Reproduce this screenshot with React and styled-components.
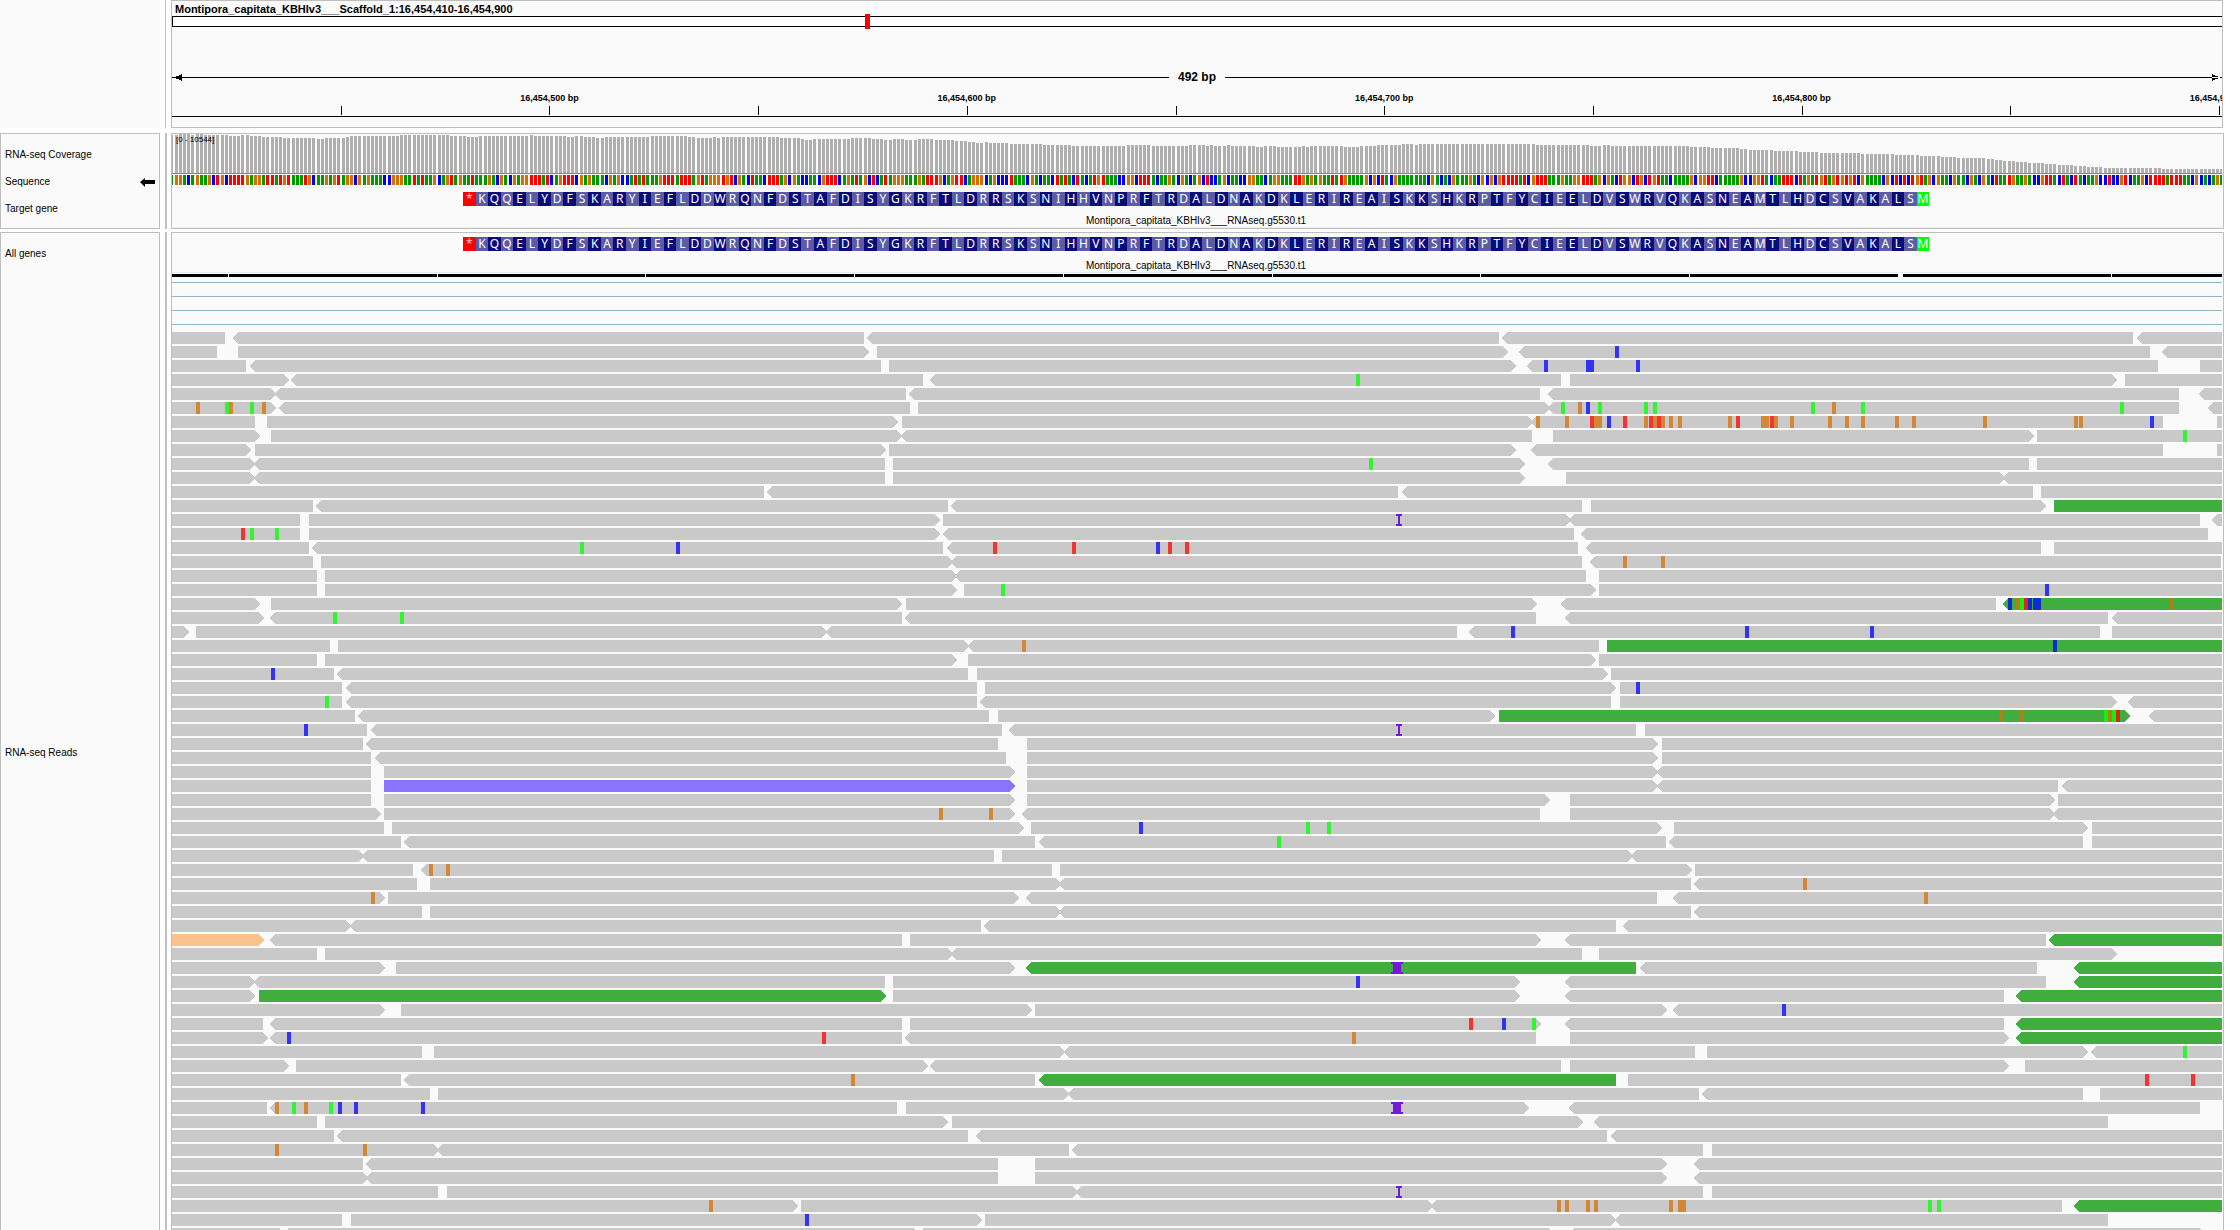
import React from "react";
import styled, { createGlobalStyle } from "styled-components";

const GlobalStyle = createGlobalStyle`
  * { box-sizing: border-box; }
  html, body { margin: 0; background: #ffffff; }
  body { font-family: "Liberation Sans", Arial, sans-serif; color: #000000; }
`;

const LINE = "#bfbfbf";
const PANEL = "#fafafa";

/* ---------- layout ---------- */

const Browser = styled.main`
  display: flex;
  flex-direction: column;
  height: 100vh;
  overflow: hidden;
`;

const PanelRow = styled.section`
  display: flex;
  flex: ${(p) => (p.$grow ? "1 1 0" : "none")};
  min-height: 0;
  margin-bottom: ${(p) => p.$gap || 0}px;
  padding-right: ${(p) => (p.$framed ? 16 : 17)}px;
`;

const NamePanel = styled.div`
  display: flex;
  flex-direction: column;
  flex: none;
  width: 160px;
  background: ${PANEL};
  border: ${(p) => (p.$framed ? `1px solid ${LINE}` : "none")};
  border-bottom-width: ${(p) => (p.$open ? 0 : 1)}px;
`;

const Divider = styled.div`
  flex: none;
  width: 6px;
  margin-left: 5px;
  border-left: ${(p) => p.$size}px solid ${LINE};
`;

const DataPanel = styled.div`
  display: flex;
  flex-direction: column;
  flex: 1;
  min-width: 0;
  overflow: hidden;
  background: ${PANEL};
  border: 1px solid ${LINE};
  border-bottom-width: ${(p) => (p.$open ? 0 : 1)}px;
  padding-right: ${(p) => (p.$framed ? 1 : 0)}px;
`;

const TrackName = styled.div`
  display: flex;
  align-items: center;
  justify-content: space-between;
  flex: ${(p) => (p.$height ? "none" : "1")};
  height: ${(p) => (p.$height ? `${p.$height}px` : "auto")};
  padding: 2px 4px 0;
  font-size: 10px;
  line-height: 12px;
`;

/* ---------- header ---------- */

const Locus = styled.h1`
  margin: 0;
  padding: 1px 3px 0;
  height: 15px;
  font-size: 11px;
  line-height: 14px;
  font-weight: bold;
  white-space: nowrap;
`;

const Ideogram = styled.div`
  position: relative;
  height: 11px;
  background: #ffffff;
  border: 1px solid #000000;
  border-right: 0;
`;

const Marker = styled.div`
  position: absolute;
  top: -3px;
  left: 33.78%;
  width: 5px;
  height: 15px;
  background: #ff0000;
`;

const Span = styled.div`
  display: flex;
  align-items: center;
  height: 14px;
  margin-top: 43px;
  font-size: 12px;
  line-height: 14px;
  font-weight: bold;
`;

const SpanLine = styled.div`
  flex: 1;
  height: 1px;
  background: #000000;
`;

const SpanText = styled.div`
  padding: 0 9px;
`;

const Arrowhead = styled.svg`
  display: block;
  flex: none;
  width: 10px;
  height: 7px;
`;

const Ruler = styled.svg`
  display: block;
  width: 100%;
  height: 43px;
  font-size: 9px;
  font-weight: bold;
  text-anchor: middle;
`;

/* ---------- tracks ---------- */

const Coverage = styled.div`
  position: relative;
  height: 40px;
`;

const Range = styled.span`
  position: absolute;
  left: 4px;
  top: 1px;
  font-size: 8px;
  line-height: 10px;
`;

const Chart = styled.svg`
  display: block;
  flex: none;
  width: 100%;
  height: ${(p) => p.$height}px;
`;

const SequenceTrack = styled.div`
  height: 14px;
  padding-top: 1px;
  border-bottom: 1px solid #ececec;
`;

const GeneTrack = styled.div`
  flex: none;
  height: 40px;
  padding: 4px 0 0 14.2%;
  border-bottom: 1px solid #ececec;
`;

const Gene = styled.div`
  width: 83.34%;
`;

const Residues = styled.div`
  display: flex;
  height: 14px;
`;

const RESIDUE_COLORS = { stop: "#ff0000", start: "#00ff00", light: "#5c5ca4", dark: "#0c0c78" };

const Residue = styled.span`
  flex: 1 1 0;
  min-width: 0;
  text-align: center;
  font-family: "Noto Sans", "Open Sans", sans-serif;
  font-size: 12px;
  line-height: 14px;
  color: ${(p) => (p.$kind === "stop" ? "#ffc4c4" : "#ffffff")};
  background: ${(p) => RESIDUE_COLORS[p.$kind]};
`;

const GeneName = styled.div`
  margin-top: 8px;
  text-align: center;
  font-size: 10px;
  line-height: 14px;
  white-space: nowrap;
`;

const Lane = styled.div`
  flex: none;
  height: ${(p) => p.$height}px;
  border-top: 1px solid #94b5c6;
`;

/* ---------- data ---------- */

const VIEW = 2050;
const BASE = VIEW / 491;
const baseX = (k) => Math.floor(k * BASE - 1.04);

const SEQUENCE = [
  "GOOGBGOGGOBROBRRRROGOOGRRGRORG",
  "GGROBGGOGORGOOBOGOGGGBBOOOGGRG",
  "RGGOBGORGOGGRGGGOGBOGBOGOORRRG",
  "RBGORRRBOGOGGGBOGOBBGRGRGGGORRRGRRRGORGOOOROR",
  "BOGBRGGBRRRGOBOGBBGGBORRRBGOGRGOBRBGRGOOOGGGOGRRROBGOR",
  "RBGOOOBGOBBBRGGGBOGBGGBRGRGBRGBGRORGGGBB",
  "OOBRRRGBGGOGBOGBGOBRBBGOBGGBBOOGGBGOOGGG",
  "RROGOGOGGRGROGGGGOBOBRGBOGGGGGGGBOGBGBOG",
  "GGOGBOBOBORRRRGRBORRRGGGOGGOORRRGOBOGBRO",
  "OBROBRORGGBGGGGOBOORRBGGGGGOBBOORGBGGRRR",
  "BRGOGRORGOR",
  "ORORBOGGGGBOBRBRBRORGOBOGGBOGGBOGBOGBRGG",
  "ROGGOGBBORRGBRGBRGBGGOBBRBBORBGGOBRRRRGR",
  "RRGGBOBGBGOG",
].join("");

const BASE_COLORS = { G: "#009900", O: "#d17105", B: "#0000ff", R: "#ff0000" };

const PROTEIN =
  "*KQQELYDFSKARYIEFLDDWRQNFDSTAFDISYGKRFTLDRRSKSNIHHVNPRFTRDALDNAKDKLERIREAISKKSHKRPTFYCIEELDVSWRVQKASNEAMTLHDCSVAKALSM";

/* coverage depth steps: [start, bar height] */
const DEPTH = [
  [0, 38], [7, 39], [19, 38], [23, 39], [32, 38], [56, 37], [69, 38], [77, 37], [90, 36], [111, 35],
  [145, 34], [153, 35], [174, 36], [178, 37], [228, 38], [278, 37], [295, 36], [307, 37],
  [334, 36], [338, 37], [358, 38], [362, 37], [396, 36], [403, 37], [411, 36], [423, 35],
  [433, 36], [479, 37], [515, 36], [525, 35], [541, 36], [545, 35], [550, 36], [608, 35],
  [629, 34], [633, 33], [641, 34], [679, 35], [700, 34], [712, 33], [721, 34], [733, 33],
  [746, 34], [763, 33], [783, 32], [796, 31], [803, 30], [813, 31], [816, 30], [838, 29],
  [870, 28], [900, 27], [955, 28], [979, 27], [1016, 28], [1033, 27], [1038, 28], [1041, 27],
  [1055, 28], [1059, 27], [1083, 26], [1092, 27], [1104, 26], [1129, 27], [1133, 26],
  [1138, 27], [1171, 26], [1188, 27], [1204, 28], [1229, 29], [1242, 28], [1246, 29],
  [1363, 28], [1417, 27], [1431, 28], [1439, 27], [1517, 26], [1539, 25], [1567, 24],
  [1576, 23], [1601, 22], [1626, 21], [1647, 20], [1689, 19], [1723, 18], [1748, 17],
  [1769, 16], [1785, 15], [1815, 14], [1823, 13], [1831, 12], [1844, 11], [1856, 10],
  [1873, 9], [1886, 8], [1902, 7], [1915, 6], [1932, 5], [1990, 4],
];

/*
 * One line per alignment row, split into four windows by "/".
 *   a:b      gap between two reads; ">" or "<" marks a read end drawn as an arrow,
 *            a trailing letter colours the read on the right
 *   G O B R  mismatched base,  I W  small or large insertion
 */
const READS = `
195:234< / 552:576< / 897:921< / 1239:1266<
171:234 / 552>:591 / 909>:972< B1245 / 1290:1341<
258:285< / 603:627 / 933>:996< B1032 B1158 B1170 B1308 / 1314:1440
372>:408< / 729:765< / G468 1083:1110 / 1176>:1215
333>:360< / 678:702< / 1020:1059< / 1377:1452<
O108 G195 O207 G270 O306 333>:372< / 690:714 / 1035>:1059< G1083 O1134 B1158 G1194 G1332 G1359 / G273 O336 G423 G1200 1377:1479<
285:321 / 639>:666 / 984>:1008< O1008 O1095 R1170 O1182 O1194 B1221 R1269 O1332 R1347 O1359 R1371 O1383 O1407 O1434 / O24 R48 O123 O135 R150 O162 O210 O324 O375 O423 O525 O576 O789 O1062 O1077 B1290 1329:1491
285>:333 / 651>:678< / 996:1059 / 927>:951 G1389
258>:285 / 603>:627 / 933>:1008< / 1329:1491
270>:297< / 615:639 / G507 960>:1059< / 927:951
270>:297< / 615:639 / 960>:1098 / 840>:864<
 / 252:276< / 594:621< / 939:963
459:483< / 804:828< / 1146:1173 / 963>:1002g
420:447 / 765>:789 / I588 1098>:1122< / 1440:1491<
R243 G270 G345 420:447 / 765>:804< / 1122:1158< / 1464:1600
447:471< G1260 B1548 / 789:816< R939 R1176 B1428 R1464 R1515 / 1134:1173< / 963:1002
459:483 / 804>:828< / 1146:1185< O1269 O1383 / 1503:1600
471:495 / 816>:840< / 1158:1197 /
471:495 / 816>:852 G963 / 1173>:1197 / B975
285>:333 / 651>:678 / 996>:1098< / 828:864<g B864 O888 G900 R912 B924 B939 B951 O1350
297>:345< G519 G720 / 666:690< / 1008:1110< / 1164:1191<
72>:108 / 426>:453< / 771:822< B933 / B75 B450 1140:1176
510:534 / 852>:879< O1026 / 1197:1221g / B999
471:495 / 816>:864 / 1173>:1197 /
B333 522:546< / 864:891 / 1209>:1233 /
546:573< / 891:915 / 1233>:1260 B1308 /
G495 546:573< / 891:915< / 1233:1260 / 1176>:1239<
585:609< / 927:954 / 870>:897g / O837 O900 G1152 O1164 G1176 R1188 1215>:1302<
B432 621:648< / 966:1002< / I588 1308:1335 /
609:633< / 954:1041 / 1359>:1386 /
633:660< / 978:1041 / 1359>:1386 /
633:672 / 990>:1041 / 1359>:1386< /
633:672p / 990>:1041 / 1359>:1386< / 1014:1041<
633:672 / 990>:1041 / 1035>:1110 / 990>:1014
648>:672 / O777 O927 990>:1041< / 1020:1110 / 990>:1014<
672:696 / 1017>:1053 B1377 / G318 G381 1371>:1422 / 1089>:1116
723:747< / 1065:1092< / G231 1398:1422< / 1089:1116
597>:621< / 942:966 / 1284>:1308< /
759:798< O807 O858 / 1116:1140 / 1461>:1485 /
771:810 / 1128>:1152< / 1473:1497< / O249
O633 660>:684 / 1002>:1053< / 1371:1434< / O612
786:810 / 1128>:1152< / 1473:1497< /
558>:585< / 903:927< / 1248:1284< /
297>:345< / 666:690 / 1008>:1110< / 978:1002<g
471:495 / 804>:828< / 1146:1197 / 1176>:1600
660>:708 / 990>:1053<g / W573 1308:1335< / 951:1077<g
270>:297< / 615:639 / B468 945>:1110< / 978:1077<g
270>:297g / 603>:639 / 945>:1110< / 852:903<g
660>:723 / 1041>:1065 / 1386>:1434< / B186
309:345< / 666:690 / R807 B906 G996 1008>:1110< / 852:903<g
309>:345< B381 / R426 666:690< / O456 1008:1110 / 852>:903<g
786:822 / 1140>:1167< / 1485:1521 / 1089>:1128< G1389
372>:408 / 729>:765< / 1083:1110 / 852>:915
723:747< / O513 1065:1092<g / 1248:1284 / R1275 R1413
810:834 / 1152>:1179< / 1497:1521< / 1089:1140
321:345< O345 G396 O432 G507 B534 B582 B783 / 651:678 / W573 972>:1122< / 1440:1600
471:495 / 789>:816 / 1134>:1197< / 1164:1600
522:546< / 864:903< / 1221:1248< /
O345 O609 822>:846< / 1167:1191< / 1509:1536 /
609:633< / 954:1065 / 1386>:1497< /
609>:633< / 954:1065 / 1386>:1497< /
834:861 / 1179>:1203< / I588 1509:1536 /
 / O87 339>:363 / 684>:708< O1071 O1095 O1158 O1182 O1407 O1434 O1446 / G624 G651 1026:1077<g
546:573 / B375 891>:915 / 1233>:1260< / 1164:1600
360:384 / 702>:729 / 1047>:1122< / 1440>:1600`;

const FIRST_READ_COLOR = { 43: "o" };
const READ_COLORS = { n: "#c9c9c9", g: "#3fae3f", p: "#8b74ff", o: "#fcc28b" };
const MISMATCH = {
  n: { G: "#33f433", O: "#d18736", B: "#3333f4", R: "#f43333" },
  g: { G: "#11f011", O: "#ae8019", B: "#112bd2", R: "#d22b11" },
};

function parseRow(line, row) {
  const reads = [];
  const marks = [];
  let current = { color: FIRST_READ_COLOR[row] || "n", start: -10, left: false };
  line.split("/").forEach((part, win) => {
    const toX = (v) => Math.round((win * 1560 + Number(v) - 36) / 3);
    part.trim().split(/\s+/).filter(Boolean).forEach((token) => {
      const gap = token.match(/^(\d+)(>?):(\d+)(<?)([gp]?)$/);
      if (gap) {
        reads.push({ ...current, end: toX(gap[1]), right: gap[2] === ">" });
        current = { color: gap[5] || "n", start: toX(gap[3]), left: gap[4] === "<" };
      } else {
        marks.push({ kind: token[0], x: toX(token.slice(1)), on: current.color });
      }
    });
  });
  if (current.start < VIEW) reads.push({ ...current, end: VIEW + 10, right: false });
  return { reads, marks };
}

const ROWS = READS.slice(1).split("\n").map(parseRow);

/* ---------- drawings ---------- */

function Read({ read, y }) {
  const { start, end, left, right, color } = read;
  const points = [[start, y]];
  points.push([end, y]);
  if (right) points.push([end + 5, y + 6]);
  points.push([end, y + 12], [start, y + 12]);
  if (left) points.push([start - 5, y + 6]);
  return <polygon points={points.join(" ")} fill={READ_COLORS[color]} />;
}

function Mark({ mark, y }) {
  if (mark.kind === "I" || mark.kind === "W") {
    const w = mark.kind === "I" ? 6 : 12;
    return (
      <g fill="#7617db">
        <rect x={mark.x} y={y} width={w} height="2" />
        <rect x={mark.x + 2} y={y} width={w - 4} height="12" />
        <rect x={mark.x} y={y + 10} width={w} height="2" />
      </g>
    );
  }
  const palette = MISMATCH[mark.on] || MISMATCH.n;
  return <rect x={mark.x} y={y} width="4" height="12" fill={palette[mark.kind]} />;
}

function ReadsChart() {
  const height = ROWS.length * 14;
  return (
    <Chart $height={height} viewBox={`0 0 ${VIEW} ${height}`} preserveAspectRatio="none" shapeRendering="crispEdges">
      {ROWS.map((row, i) => (
        <g key={i}>
          {row.reads.map((read, j) => <Read key={j} read={read} y={i * 14} />)}
          {row.marks.map((mark, j) => <Mark key={j} mark={mark} y={i * 14} />)}
        </g>
      ))}
    </Chart>
  );
}

function CoverageChart() {
  const bars = [];
  for (let k = 0; k < 492; k += 1) {
    const x = baseX(k);
    let depth = DEPTH[0][1];
    DEPTH.forEach(([from, h]) => { if (x + 1 >= from) depth = h; });
    bars.push(<rect key={k} x={x} y={39 - depth} width="3" height={depth} />);
  }
  return (
    <Chart $height={40} viewBox={`0 0 ${VIEW} 40`} preserveAspectRatio="none" shapeRendering="crispEdges" fill="#afafaf">
      {bars}
      <rect x="0" y="39" width={VIEW} height="1" fill="#868686" />
    </Chart>
  );
}

function SequenceChart() {
  return (
    <Chart $height={10} viewBox={`0 0 ${VIEW} 10`} preserveAspectRatio="none" shapeRendering="crispEdges">
      {SEQUENCE.split("").map((base, k) => (
        <rect key={k} x={baseX(k)} y="0" width="3" height="10" fill={BASE_COLORS[base]} />
      ))}
    </Chart>
  );
}

const SPLICE = [[0, 56], [57, 265], [266, 473], [474, 682], [683, 891], [892, 1100], [1101, 1308], [1309, 1517], [1518, 1726], [1731, 1939], [1940, 2050]];

function GeneBars() {
  return (
    <Chart $height={9} viewBox={`0 0 ${VIEW} 9`} preserveAspectRatio="none" shapeRendering="crispEdges">
      {SPLICE.map(([a, b]) => <rect key={a} x={a} y="1" width={b - a} height="3" />)}
    </Chart>
  );
}

const TICKS = ["", "16,454,500 bp", "", "16,454,600 bp", "", "16,454,700 bp", "", "16,454,800 bp", "", "16,454,900 bp"];
const FIRST_TICK = 168.8;
const TICK_STEP = 208.68;

function RulerScale() {
  return (
    <Ruler>
      {TICKS.map((label, i) => {
        const x = `${((FIRST_TICK + TICK_STEP * i) / VIEW) * 100}%`;
        return (
          <g key={i}>
            {label && <text x={x} y="17">{label}</text>}
            <rect x={x} y="22" width="1" height="9" shapeRendering="crispEdges" />
          </g>
        );
      })}
      <rect x="0" y="32" width="100%" height="1" shapeRendering="crispEdges" />
    </Ruler>
  );
}

function residueKind(letter, i) {
  if (letter === "*") return "stop";
  if (i === PROTEIN.length - 1) return "start";
  return i % 2 ? "light" : "dark";
}

function GeneModel() {
  return (
    <GeneTrack>
      <Gene>
        <Residues>
          {PROTEIN.split("").map((letter, i) => (
            <Residue key={i} $kind={residueKind(letter, i)}>{letter}</Residue>
          ))}
        </Residues>
        <GeneName>Montipora_capitata_KBHIv3___RNAseq.g5530.t1</GeneName>
      </Gene>
    </GeneTrack>
  );
}

export default function App() {
  return (
    <Browser>
      <GlobalStyle />
      <PanelRow $gap={5}>
        <NamePanel />
        <Divider $size={1} />
        <DataPanel>
          <Locus>Montipora_capitata_KBHIv3___Scaffold_1:16,454,410-16,454,900</Locus>
          <Ideogram><Marker /></Ideogram>
          <Span>
            <Arrowhead viewBox="0 0 10 7" shapeRendering="crispEdges"><path d="M0 3h10v1H0zM2 3.5 10 0v7z" /></Arrowhead>
            <SpanLine />
            <SpanText>492 bp</SpanText>
            <SpanLine />
            <Arrowhead viewBox="0 0 10 7" shapeRendering="crispEdges"><path d="M0 3h10v1H0zM8 3.5 0 0v7z" /></Arrowhead>
          </Span>
          <RulerScale />
        </DataPanel>
      </PanelRow>

      <PanelRow $gap={3} $framed>
        <NamePanel $framed>
          <TrackName $height={40}>RNA-seq Coverage</TrackName>
          <TrackName $height={14}>
            Sequence
            <svg width="15" height="9" viewBox="0 0 15 9" aria-hidden="true"><path d="M0 4 5 0v2h10v4H5v3z" /></svg>
          </TrackName>
          <TrackName $height={40}>Target gene</TrackName>
        </NamePanel>
        <Divider $size={2} />
        <DataPanel $framed>
          <Coverage>
            <CoverageChart />
            <Range>[0 - 10544]</Range>
          </Coverage>
          <SequenceTrack><SequenceChart /></SequenceTrack>
          <GeneModel />
        </DataPanel>
      </PanelRow>

      <PanelRow $grow $framed>
        <NamePanel $framed $open>
          <TrackName $height={40}>All genes</TrackName>
          <TrackName>RNA-seq Reads</TrackName>
        </NamePanel>
        <Divider $size={2} />
        <DataPanel $framed $open>
          <GeneModel />
          <GeneBars />
          <Lane $height={14} />
          <Lane $height={14} />
          <Lane $height={14} />
          <Lane $height={8} />
          <ReadsChart />
        </DataPanel>
      </PanelRow>
    </Browser>
  );
}
